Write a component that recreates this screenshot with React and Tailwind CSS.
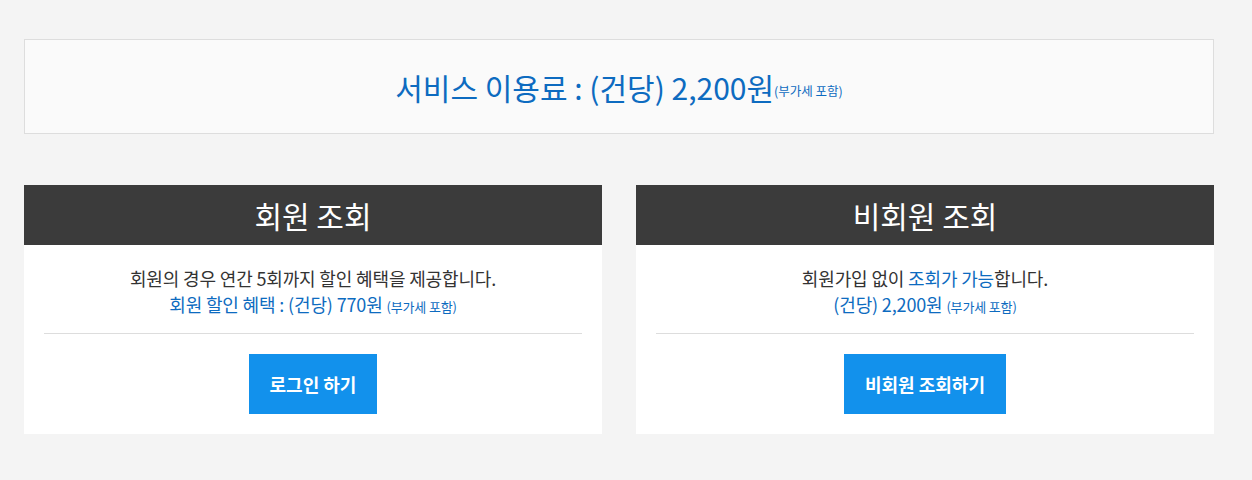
import React from "react";

const font = { fontFamily: '"Noto Sans CJK KR", "Noto Sans", sans-serif' };

const Card = ({ title, children, button }) => (
    <div className="flex-1 bg-white">
        <div className="h-[60px] bg-[#3b3b3b] flex items-center justify-center text-white text-[30px] font-normal">
            {title}
        </div>
        <div className="px-5 pt-5 pb-5">
            <div className="text-center text-[18px] leading-[26px] tracking-[-0.15px] text-[#333]">{children}</div>
            <div className="mt-4 border-t border-[#dddddd]"></div>
            <div className="mt-5 flex justify-center">
                <button className="h-[60px] px-[21px] bg-[#1291ec] text-white text-[18px] font-bold">
                    {button}
                </button>
            </div>
        </div>
    </div>
);

export default function App() {
    return (
        <div className="min-h-[480px] bg-[#f4f4f4] pt-[39px] pl-6 pr-[38px]" style={font}>
            <div className="h-[95px] border border-[#dddddd] bg-[#fafafa] flex items-center justify-center text-[#0d6bc0]">
                <span className="text-[30px] leading-none">서비스 이용료 : (건당) 2,200원</span>
                <span className="text-[12.5px] leading-none self-end mb-[36px]">(부가세 포함)</span>
            </div>
            <div className="mt-[51px] flex gap-[34px]">
                <Card title="회원 조회" button="로그인 하기">
                    <p className="h-[26px]">회원의 경우 연간 5회까지 할인 혜택을 제공합니다.</p>
                    <p className="h-[26px] text-[#0d6bc0]">
                        회원 할인 혜택 : (건당) 770원 <span className="text-[13px] leading-none">(부가세 포함)</span>
                    </p>
                </Card>
                <Card title="비회원 조회" button="비회원 조회하기">
                    <p className="h-[26px]">
                        회원가입 없이 <span className="text-[#0d6bc0]">조회가 가능</span>합니다.
                    </p>
                    <p className="h-[26px] text-[#0d6bc0]">
                        (건당) 2,200원 <span className="text-[13px] leading-none">(부가세 포함)</span>
                    </p>
                </Card>
            </div>
        </div>
    );
}
